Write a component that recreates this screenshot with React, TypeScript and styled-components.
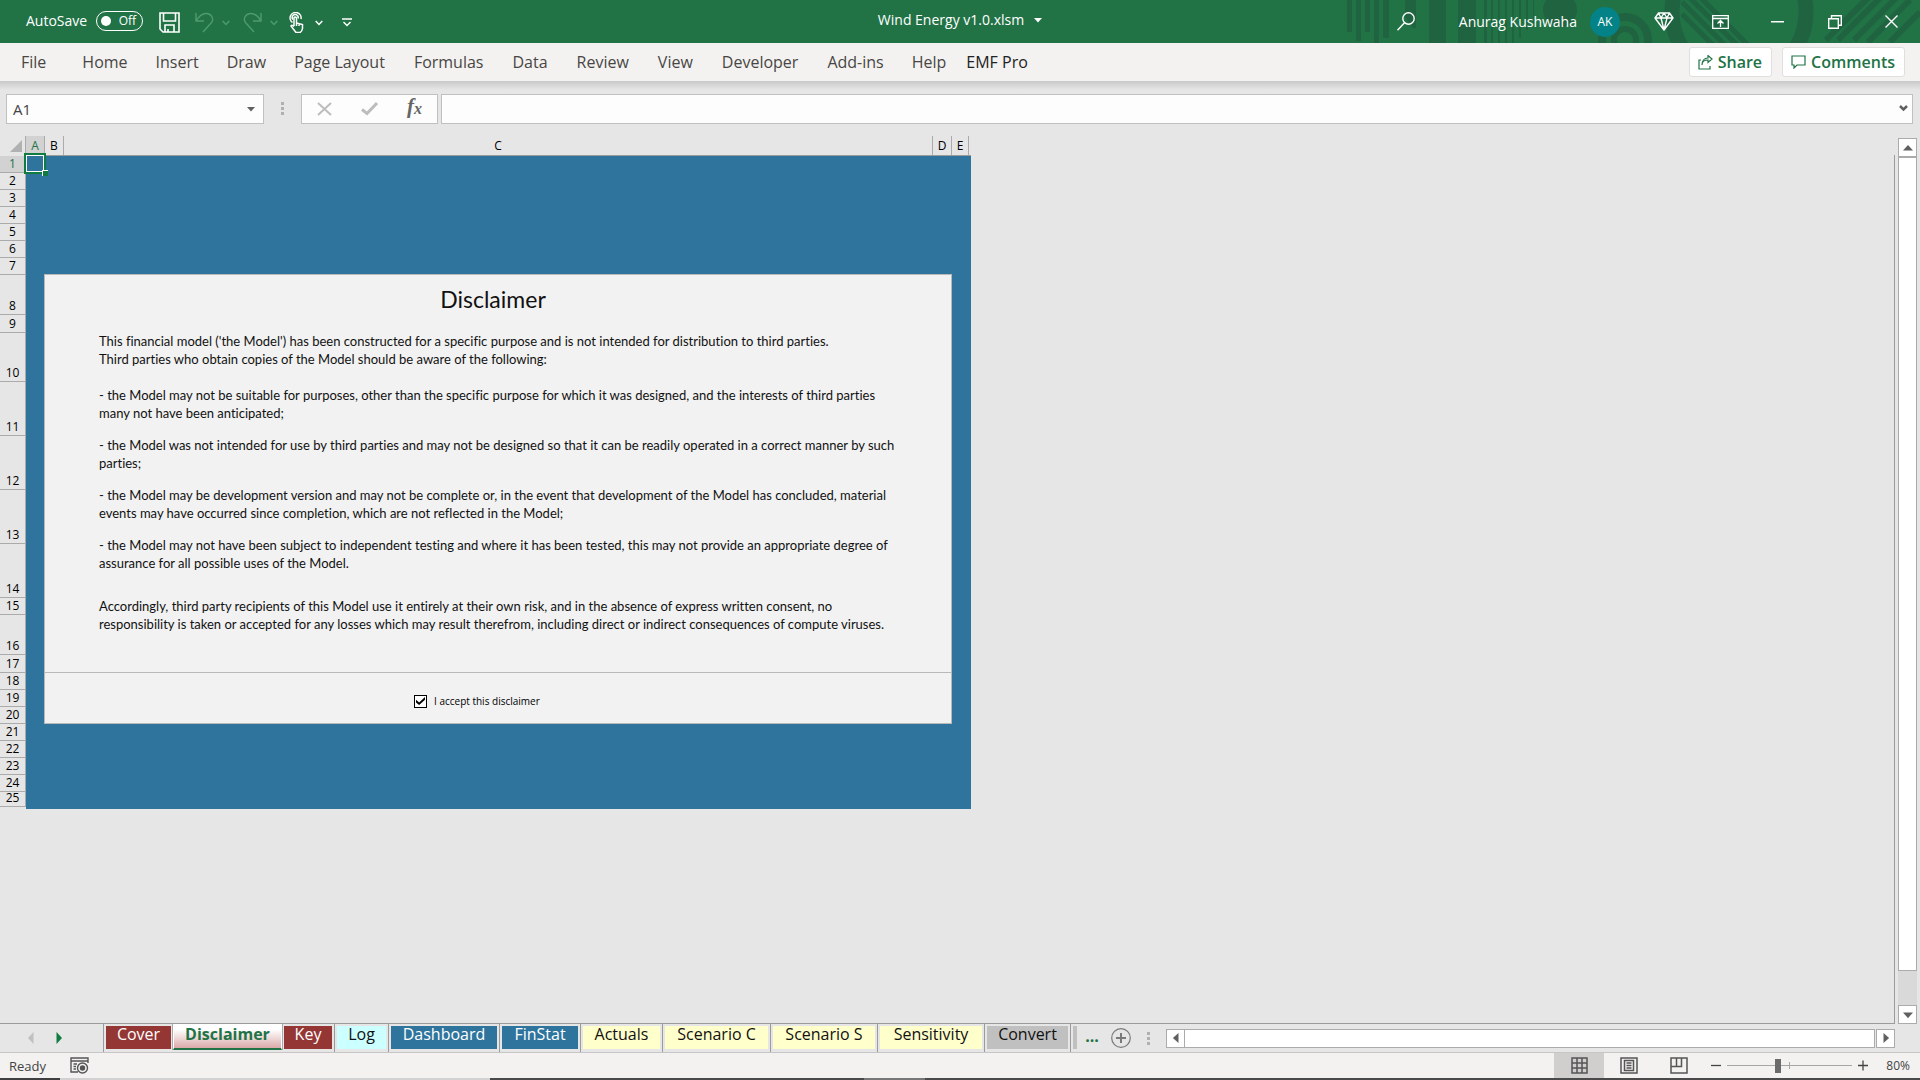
import React from "react";
import styled, { createGlobalStyle } from "styled-components";

const GlobalStyle = createGlobalStyle`
  *, *::before, *::after { box-sizing: border-box; }
  body { margin: 0; background: #e6e6e6; font-family: "Open Sans", "Noto Sans", sans-serif; }
  button, input { font: inherit; color: inherit; }
  button { border: 0; padding: 0; background: none; display: inline-flex; align-items: center; justify-content: center; }
  svg { display: block; flex: none; }
`;

/* ---------- shell ---------- */
const Window = styled.div`
  display: flex;
  flex-direction: column;
  min-height: 100vh;
`;

/* ---------- title bar ---------- */
const TitleBar = styled.header`
  position: relative;
  display: grid;
  grid-template-columns: 1fr auto 1fr;
  align-items: center;
  height: 43px;
  background: #217346;
  color: #fff;
  font-size: 14px;
`;
const Pattern = styled.svg`
  position: absolute;
  top: 0;
  right: 0;
`;
const QuickAccess = styled.div`
  display: flex;
  align-items: center;
  padding: 0 0 2px 26px;
`;
const AutoSave = styled.span`
  margin-right: 9px;
`;
const Toggle = styled.button`
  width: 47px;
  height: 20px;
  border: 1px solid #fff;
  border-radius: 10px;
  justify-content: space-between;
  padding: 0 6px 0 4px;
  font-size: 12px;
  margin-right: 16px;
  &::before {
    content: "";
    width: 10px;
    height: 10px;
    border-radius: 50%;
    background: #fff;
  }
`;
const QuickButton = styled.button<{ $gap: number; $dim?: boolean }>`
  margin-right: ${(p) => p.$gap}px;
  padding-top: 4px;
  color: ${(p) => (p.$dim ? "#4f9a70" : "#fff")};
`;
const DocName = styled.button`
  position: relative;
  gap: 10px;
  padding-bottom: 4px;
`;
const TitleRight = styled.div`
  position: relative;
  display: flex;
  align-items: center;
  justify-content: flex-end;
`;
const Account = styled.button`
  gap: 13px;
  margin: 0 15px 0 44px;
`;
const Avatar = styled.span`
  width: 30px;
  height: 30px;
  border-radius: 50%;
  background: #038387;
  display: grid;
  place-items: center;
  font-size: 12px;
`;
const WindowButton = styled.button`
  width: 57px;
  height: 43px;
`;

/* ---------- ribbon ---------- */
const Ribbon = styled.nav`
  display: flex;
  align-items: center;
  height: 38px;
  padding: 0 15px 0 21px;
  background: #f3f2f1;
  font-size: 16px;
  color: #444;
`;
const RibbonTab = styled.button<{ $gap: number; $dark?: boolean }>`
  margin-right: ${(p) => p.$gap}px;
  color: ${(p) => (p.$dark ? "#222" : "#484644")};
  white-space: nowrap;
`;
const RibbonActions = styled.div`
  display: flex;
  gap: 10px;
  margin-left: auto;
`;
const ActionButton = styled.button`
  height: 30px;
  padding: 0 9px 0 8px;
  gap: 5px;
  background: #fff;
  border: 1px solid #e1dfdd;
  border-radius: 3px;
  color: #217346;
  font-size: 16px;
  font-weight: 600;
`;

/* ---------- formula bar ---------- */
const FormulaBar = styled.div`
  display: flex;
  align-items: center;
  height: 55px;
  padding: 0 7px 0 6px;
  background: linear-gradient(#c9c9c9, #e6e6e6 9px);
`;
const Field = styled.div<{ $grow?: boolean }>`
  display: flex;
  align-items: center;
  flex: ${(p) => (p.$grow ? "1" : "0 0 258px")};
  height: 30px;
  padding: 0 ${(p) => (p.$grow ? 4 : 8)}px 0 0;
  background: #fdfdfd;
  border: 1px solid #c0c0c0;
  color: #606060;
`;
const FieldInput = styled.input`
  flex: 1;
  min-width: 0;
  height: 28px;
  padding: 0 0 0 6px;
  border: 0;
  outline: 0;
  background: transparent;
  color: #444;
  font-size: 15px;
`;
const Grip = styled.span<{ $space: number }>`
  width: 3px;
  height: 13px;
  margin: 0 ${(p) => p.$space}px;
  background: repeating-linear-gradient(#b0b0b0 0 3px, transparent 3px 5px);
`;
const FxGroup = styled.div`
  display: flex;
  width: 137px;
  height: 30px;
  margin-right: 3px;
  background: #fdfdfd;
  border: 1px solid #c0c0c0;
`;
const FxButton = styled.button<{ $fx?: boolean }>`
  flex: 1;
  color: #bdbdbd;
  ${(p) => p.$fx && `color: #666; padding-bottom: 4px; font: italic bold 21px "Liberation Serif", serif;`}
  small { font-size: 16px; padding-top: 4px; }
`;

/* ---------- sheet ---------- */
const Workspace = styled.main`
  display: flex;
  flex: 1;
  padding-right: 3px;
`;
const SheetArea = styled.div`
  display: flex;
  flex-direction: column;
  flex: 1;
`;
const ColumnHeads = styled.div`
  display: flex;
  height: 19px;
  font-size: 12px;
  line-height: 20px;
  text-align: center;
  color: #000;
`;
const Corner = styled.div`
  width: 26px;
  display: flex;
  align-items: flex-end;
  justify-content: flex-end;
  padding: 0 3px 3px 0;
  border-right: 1px solid #ababab;
`;
const ColumnHead = styled.div<{ $w: number; $on?: boolean }>`
  width: ${(p) => p.$w}px;
  border-right: 1px solid #ababab;
  background: ${(p) => (p.$on ? "#d2d2d2" : "transparent")};
  color: ${(p) => (p.$on ? "#217346" : "#000")};
`;
const SheetBody = styled.div`
  display: flex;
  align-items: flex-start;
  flex: 1;
  border-right: 1px solid #9b9b9b;
  border-bottom: 1px solid #9b9b9b;
`;
const RowHeads = styled.div`
  width: 26px;
  padding-top: 1px;
  border-right: 1px solid #ababab;
`;
const RowHead = styled.div<{ $h: number; $on?: boolean }>`
  display: flex;
  align-items: flex-end;
  justify-content: center;
  height: ${(p) => p.$h}px;
  border-bottom: 1px solid #ababab;
  background: ${(p) => (p.$on ? "#d2d2d2" : "transparent")};
  color: ${(p) => (p.$on ? "#217346" : "#000")};
  font-size: 12px;
  line-height: 16px;
`;
const Cells = styled.div`
  position: relative;
  width: 945px;
  padding: 118px 19px 85px 18px;
  background: #2e749d;
  border-top: 1px solid #9b9b9b;
`;
const Cursor = styled.div`
  position: absolute;
  top: -3px;
  left: -2px;
  width: 22px;
  height: 21px;
  border: 2px solid #107c41;
  outline: 1px solid #fff;
  outline-offset: -3px;
  &::after {
    content: "";
    position: absolute;
    right: -4px;
    bottom: -4px;
    width: 6px;
    height: 6px;
    background: #107c41;
    border-top: 1px solid #fff;
    border-left: 1px solid #fff;
  }
`;
const Panel = styled.section`
  border: 1px solid #b9b9b9;
  background: #f2f2f2;
  color: #111;
  font-family: Lato, "Open Sans", sans-serif;
  font-variant-ligatures: none;
`;
const PanelTitle = styled.h1`
  margin: 0;
  padding: 9px 10px 18px 0;
  font-size: 23px;
  line-height: 30px;
  font-weight: 400;
  text-align: center;
`;
const PanelText = styled.div`
  height: 341px;
  padding-left: 54px;
  font-size: 13px;
  line-height: 18px;
  white-space: nowrap;
  border-bottom: 1px solid #b9b9b9;
`;
const Para = styled.p<{ $after: number }>`
  margin: 0 0 ${(p) => p.$after}px;
`;
const Accept = styled.label`
  display: flex;
  align-items: center;
  gap: 7px;
  height: 50px;
  padding: 6px 0 0 369px;
  font-size: 10px;
  font-family: "Open Sans", sans-serif;
  color: #000;
`;
const Tick = styled.input`
  appearance: none;
  display: grid;
  place-items: center;
  width: 13px;
  height: 13px;
  margin: 0;
  border: 1px solid #000;
  background: #fff;
  &:checked::after {
    content: "";
    width: 9px;
    height: 8px;
    background: #000;
    clip-path: polygon(0 35%, 35% 68%, 100% 0, 100% 34%, 35% 100%, 0 68%);
  }
`;

/* ---------- scroll bars ---------- */
const VScroll = styled.div`
  display: flex;
  flex-direction: column;
  width: 19px;
  margin: 2px 0 0 3px;
  background: #d9d9d9;
`;
const ScrollButton = styled.button`
  width: 19px;
  height: 19px;
  border: 1px solid #ababab;
  background: #fff;
  color: #606060;
  flex: none;
`;
const VThumb = styled.div`
  flex: 1;
  margin-bottom: 34px;
  background: #fff;
  border: 1px solid #ababab;
`;
const HScroll = styled.div`
  display: flex;
  flex: 1;
  margin-right: 25px;
`;
const HThumb = styled.div`
  flex: 1;
  margin: 0 1px 0 -1px;
  background: #fff;
  border: 1px solid #ababab;
`;

/* ---------- sheet tabs ---------- */
const TabBar = styled.div`
  display: flex;
  align-items: center;
  height: 29px;
  border-bottom: 1px solid #c6c6c6;
  color: #606060;
`;
const TabNav = styled.div`
  display: flex;
  gap: 20px;
  width: 103px;
  padding-left: 27px;
`;
const NavButton = styled.button<{ $off?: boolean }>`
  color: ${(p) => (p.$off ? "#c0c0c0" : "#107c41")};
`;
const Tabs = styled.div`
  display: flex;
  align-self: stretch;
`;
const TabSlot = styled.div<{ $bare?: boolean }>`
  display: flex;
  align-items: flex-start;
  padding: 2px 2px 3px 2px;
  border-left: ${(p) => (p.$bare ? 0 : 1)}px solid #9b9b9b;
`;
const SheetTab = styled.button<{ $w: number; $bg: string; $ink: string }>`
  width: ${(p) => p.$w}px;
  height: 23px;
  padding-bottom: 7px;
  background: ${(p) => p.$bg};
  color: ${(p) => p.$ink};
  font-size: 16px;
  line-height: 18px;
  white-space: nowrap;
`;
const ActiveTab = styled.button`
  width: 109px;
  height: 26px;
  padding-bottom: 5px;
  border: 1px solid #fff;
  border-bottom: 2px solid #217346;
  background: linear-gradient(#fff 20%, #dba9a9);
  box-shadow: -1px 0 #ababab, 1px 0 #ababab;
  color: #217346;
  font-size: 16px;
  line-height: 18px;
  font-weight: 700;
`;
const MoreTabs = styled.button`
  width: 26px;
  padding-bottom: 5px;
  color: #217346;
  font-size: 16px;
  font-weight: 700;
  margin-right: 6px;
`;

/* ---------- status bar ---------- */
const StatusBar = styled.footer`
  display: flex;
  align-items: center;
  height: 25px;
  padding: 0 10px 0 9px;
  background: #f3f2f1;
  color: #444;
  font-size: 12px;
`;
const Ready = styled.span`
  font-size: 13px;
`;
const Macro = styled.button`
  margin: 0 auto 0 24px;
`;
const ViewGroup = styled.div`
  display: flex;
  margin-right: 7px;
`;
const ViewButton = styled.button<{ $on?: boolean }>`
  width: 50px;
  height: 25px;
  background: ${(p) => (p.$on ? "#d0cfce" : "transparent")};
`;
const ZoomSlider = styled.input`
  appearance: none;
  width: 125px;
  height: 15px;
  margin: 0 6px;
  background:
    linear-gradient(#a6a6a6, #a6a6a6) 62px 50% / 1px 7px no-repeat,
    linear-gradient(#a6a6a6, #a6a6a6) 0 50% / 100% 1px no-repeat;
  &::-webkit-slider-thumb {
    appearance: none;
    width: 6px;
    height: 14px;
    background: #6b6b6b;
  }
`;
const ZoomValue = styled.button`
  width: 42px;
  justify-content: flex-end;
`;
const TaskbarEdge = styled.div`
  height: 2px;
  background: linear-gradient(
    90deg,
    #3f3f3f 60px, #d2d2d2 60px 490px, #4a4a4a 490px 864px, #777 864px 925px, #4a4a4a 925px
  );
`;

const Chevron = () => (
  <svg width="8" height="6" viewBox="0 0 8 6" fill="none" stroke="currentColor" strokeWidth="1.5"><path d="M.7 1 4 4.4 7.3 1" /></svg>
);
const Arrow = ({ turn = 0, size = 8 }: { turn?: number; size?: number }) => (
  <svg width={size} height={size} viewBox="0 0 8 8" fill="currentColor"><path d="M0 2h8L4 6.5z" transform={`rotate(${turn} 4 4)`} /></svg>
);
const NavArrow = ({ flip }: { flip?: boolean }) => (
  <svg width="8" height="12" viewBox="0 0 8 12" fill="currentColor"><path d={flip ? "M6.500 0v12L1 6z" : "M1.500 0v12L7 6z"} /></svg>
);

const TitlePattern = () => (
  <Pattern width="580" height="43" viewBox="1340 0 580 43" fill="#1f6340" stroke="none" aria-hidden="true">
    <path d="M1347 0h5v32h-5zM1356 0h5v41h-5zM1365 0h5v32h-5zM1374 0h5v43h-5zM1383 0h6v38h-6zM1405 0h11v28h-3l-8-11zM1429 0h17v43h-17zM1458 0h18v43h-18z" />
    <path d="M1484 0h3v43h-3zM1491 0h2v43h-2zM1498 0h2v43h-2zM1505 0h2v43h-2zM1512 0h2v43h-2zM1519 0h2v38h-2zM1526 0h2v30h-2zM1533 0h1v24h-1z" />
    <circle cx="1560" cy="10" r="17" />
    <g fill="none" stroke="#1f6340">
      <circle cx="1625" cy="40" r="23" strokeWidth="8" />
      <circle cx="1625" cy="40" r="11" strokeWidth="6" />
      <circle cx="1739" cy="12" r="67" strokeWidth="15" />
      <path strokeWidth="5" d="m1682 14 31 31m-31-43 43 43m-36-48 48 48m-37-48 48 48" />
      <path strokeWidth="6" d="m1826 40 42-42m-30 42 42-42m-26 42 42-42m-28 44 42-42m-20 42 30-30" />
    </g>
  </Pattern>
);

const rows = [17, 17, 17, 17, 17, 17, 17, 40, 18, 49, 54, 54, 54, 54, 17, 40, 18, 17, 17, 17, 17, 17, 17, 17, 15];
const columns: [string, number][] = [["A", 19], ["B", 19], ["C", 869], ["D", 19], ["E", 17]];
const ribbonTabs: [string, number][] = [
  ["File", 36], ["Home", 28], ["Insert", 28], ["Draw", 28], ["Page Layout", 29], ["Formulas", 29],
  ["Data", 29], ["Review", 29], ["View", 29], ["Developer", 29], ["Add-ins", 28], ["Help", 20],
];

const red = "#943634";
const blue = "#2e749d";
const cream = "#ffffcc";
const laterTabs: [string, number, string, string][] = [
  ["Log", 49, "#ccffff", "#111"],
  ["Dashboard", 106, blue, "#fff"],
  ["FinStat", 76, blue, "#fff"],
  ["Actuals", 77, cream, "#111"],
  ["Scenario C", 103, cream, "#111"],
  ["Scenario S", 102, cream, "#111"],
  ["Sensitivity", 102, cream, "#111"],
  ["Convert", 81, "#c0c0c0", "#111"],
];

export default function App() {
  return (
    <Window>
      <GlobalStyle />
      <TitleBar>
        <TitlePattern />
        <QuickAccess>
          <AutoSave>AutoSave</AutoSave>
          <Toggle role="switch" aria-checked="false" aria-label="AutoSave">Off</Toggle>
          <QuickButton $gap={15} aria-label="Save">
            <svg width="21" height="21" viewBox="0 0 21 21" fill="none" stroke="currentColor" strokeWidth="1.6"><path d="M1 1h19v19H4l-3-3zM4.5 1v8h12V1M6 20v-7h9v7M9 20v-3" /></svg>
          </QuickButton>
          <QuickButton $gap={8} $dim aria-label="Undo">
            <svg width="19" height="21" viewBox="0 0 19 21" fill="none" stroke="currentColor" strokeWidth="1.4"><path d="M1 1v8h8M1 9C4 4 8 1 12 1.500c5 .5 7 6 4.500 9L8 20" /></svg>
          </QuickButton>
          <QuickButton $gap={13} $dim aria-label="Undo list"><Chevron /></QuickButton>
          <QuickButton $gap={8} $dim aria-label="Redo">
            <svg width="19" height="21" viewBox="0 0 19 21" fill="none" stroke="currentColor" strokeWidth="1.4"><path d="M18 1v8h-8M18 9C15 4 11 1 7 1.500c-5 .5-7 6-4.500 9L11 20" /></svg>
          </QuickButton>
          <QuickButton $gap={11} $dim aria-label="Redo list"><Chevron /></QuickButton>
          <QuickButton $gap={11} aria-label="Touch/Mouse Mode">
            <svg width="15" height="21" viewBox="0 0 15 21" fill="none" stroke="currentColor" strokeWidth="1.5"><path d="M3.500 10.500A5.500 5.500 0 1 1 12 7" /><path d="M4 7.500a3 3 0 1 1 5-1" /><path d="M5 14V6q1.200-2 2.500 0v5l6 1.500v4q-.5 3-2.500 4H7L2 14q1-1.500 3 .5M10 11v3m-2.500-3v3" /></svg>
          </QuickButton>
          <QuickButton $gap={19} aria-label="Touch list"><Chevron /></QuickButton>
          <QuickButton $gap={0} aria-label="Customize Quick Access Toolbar">
            <svg width="10" height="9" viewBox="0 0 10 9" fill="none" stroke="currentColor" strokeWidth="1.4"><path d="M0 1h10M1.500 4 5 7.500 8.500 4" /></svg>
          </QuickButton>
        </QuickAccess>
        <DocName>Wind Energy v1.0.xlsm <Arrow /></DocName>
        <TitleRight>
          <button aria-label="Search">
            <svg width="18" height="19" viewBox="0 0 18 19" fill="none" stroke="currentColor" strokeWidth="1.4"><circle cx="11.500" cy="6.500" r="5.700" /><path d="m7.500 10.800-7 7.500" /></svg>
          </button>
          <Account>Anurag Kushwaha <Avatar>AK</Avatar></Account>
          <WindowButton aria-label="Premium">
            <svg width="20" height="19" viewBox="0 0 20 19" fill="none" stroke="currentColor" strokeWidth="1.4" strokeLinejoin="round"><path d="M4.500 1h11L19 6l-9 12L1 6zM1 6h18M4.500 1 7 6l3 12 3-12 2.500-5M7 6l3-5 3 5" /></svg>
          </WindowButton>
          <WindowButton aria-label="Ribbon Display Options">
            <svg width="17" height="14" viewBox="0 0 17 14" fill="none" stroke="currentColor" strokeWidth="1.3"><path d="M.7.700h15.600v12.600H.7zM.7 3.500h15.600M8.500 12V6M5.500 8.500l3-3 3 3" /></svg>
          </WindowButton>
          <WindowButton aria-label="Minimize">
            <svg width="13" height="2" viewBox="0 0 13 2" fill="currentColor"><path d="M0 0h13v1.500H0z" /></svg>
          </WindowButton>
          <WindowButton aria-label="Restore">
            <svg width="14" height="14" viewBox="0 0 14 14" fill="none" stroke="currentColor" strokeWidth="1.400"><path d="M.7 3.700h9.600v9.600H.7zM3.500 3.500V.7h9.800v9.600h-3" /></svg>
          </WindowButton>
          <WindowButton aria-label="Close">
            <svg width="13" height="13" viewBox="0 0 13 13" fill="none" stroke="currentColor" strokeWidth="1.400"><path d="m.5.500 12 12m0-12-12 12" /></svg>
          </WindowButton>
        </TitleRight>
      </TitleBar>

      <Ribbon>
        {ribbonTabs.map(([t, gap]) => <RibbonTab key={t} $gap={gap}>{t}</RibbonTab>)}
        <RibbonTab $gap={0} $dark>EMF Pro</RibbonTab>
        <RibbonActions>
          <ActionButton>
            <svg width="15" height="15" viewBox="0 0 15 15" fill="none" stroke="currentColor" strokeWidth="1.200"><path d="M3 5H1v9h11v-3M4 10c0-3 2-5 6-5V7.500L14 4l-4-3.500V3C6 3 4 6 4 10z" /></svg>
            Share
          </ActionButton>
          <ActionButton>
            <svg width="15" height="14" viewBox="0 0 15 14" fill="none" stroke="currentColor" strokeWidth="1.200"><path d="M1 1h13v9H6l-3 3v-3H1z" /></svg>
            Comments
          </ActionButton>
        </RibbonActions>
      </Ribbon>

      <FormulaBar>
        <Field>
          <FieldInput aria-label="Name Box" defaultValue="A1" />
          <button aria-label="Name list"><Arrow /></button>
        </Field>
        <Grip $space={17} />
        <FxGroup>
          <FxButton aria-label="Cancel">
            <svg width="15" height="14" viewBox="0 0 15 14" fill="none" stroke="currentColor" strokeWidth="2"><path d="m1 1 13 12M14 1 1 13" /></svg>
          </FxButton>
          <FxButton aria-label="Enter">
            <svg width="17" height="14" viewBox="0 0 17 14" fill="none" stroke="currentColor" strokeWidth="3"><path d="m1 7.500 5 4L16 1" /></svg>
          </FxButton>
          <FxButton $fx aria-label="Insert Function">f<small>x</small></FxButton>
        </FxGroup>
        <Field $grow>
          <FieldInput aria-label="Formula Bar" />
          <button aria-label="Expand Formula Bar">
            <svg width="9" height="7" viewBox="0 0 9 7" fill="none" stroke="#606060" strokeWidth="2.500"><path d="m1 1 3.500 3.500L8 1" /></svg>
          </button>
        </Field>
      </FormulaBar>

      <Workspace>
        <SheetArea>
          <ColumnHeads>
            <Corner>
              <svg width="12" height="12" viewBox="0 0 12 12" fill="#b1b1b1"><path d="M12 0v12H0z" /></svg>
            </Corner>
            {columns.map(([name, w]) => <ColumnHead key={name} $w={w} $on={name === "A"}>{name}</ColumnHead>)}
          </ColumnHeads>
          <SheetBody>
            <RowHeads>
              {rows.map((h, i) => <RowHead key={i} $h={h} $on={i === 0}>{i + 1}</RowHead>)}
            </RowHeads>
            <Cells>
              <Cursor />
              <Panel>
                <PanelTitle>Disclaimer</PanelTitle>
                <PanelText>
                  <Para $after={18}>
                    This financial model ('the Model') has been constructed for a specific purpose and is not intended for distribution to third parties.<br />
                    Third parties who obtain copies of the Model should be aware of the following:
                  </Para>
                  <Para $after={14}>
                    - the Model may not be suitable for purposes, other than the specific purpose for which it was designed, and the interests of third parties<br />
                    many not have been anticipated;
                  </Para>
                  <Para $after={14}>
                    - the Model was not intended for use by third parties and may not be designed so that it can be readily operated in a correct manner by such<br />
                    parties;
                  </Para>
                  <Para $after={14}>
                    - the Model may be development version and may not be complete or, in the event that development of the Model has concluded, material<br />
                    events may have occurred since completion, which are not reflected in the Model;
                  </Para>
                  <Para $after={25}>
                    - the Model may not have been subject to independent testing and where it has been tested, this may not provide an appropriate degree of<br />
                    assurance for all possible uses of the Model.
                  </Para>
                  <Para $after={0}>
                    Accordingly, third party recipients of this Model use it entirely at their own risk, and in the absence of express written consent, no<br />
                    responsibility is taken or accepted for any losses which may result therefrom, including direct or indirect consequences of compute viruses.
                  </Para>
                </PanelText>
                <Accept>
                  <Tick type="checkbox" defaultChecked />
                  I accept this disclaimer
                </Accept>
              </Panel>
            </Cells>
          </SheetBody>
        </SheetArea>
        <VScroll>
          <ScrollButton aria-label="Scroll up"><Arrow turn={180} size={10} /></ScrollButton>
          <VThumb />
          <ScrollButton aria-label="Scroll down"><Arrow size={10} /></ScrollButton>
        </VScroll>
      </Workspace>

      <TabBar>
        <TabNav>
          <NavButton $off aria-label="Previous sheet"><NavArrow flip /></NavButton>
          <NavButton aria-label="Next sheet"><NavArrow /></NavButton>
        </TabNav>
        <Tabs>
          <TabSlot><SheetTab $w={65} $bg={red} $ink="#fff">Cover</SheetTab></TabSlot>
          <ActiveTab>Disclaimer</ActiveTab>
          <TabSlot $bare><SheetTab $w={48} $bg={red} $ink="#fff">Key</SheetTab></TabSlot>
          {laterTabs.map(([name, w, bg, ink]) => (
            <TabSlot key={name}><SheetTab $w={w} $bg={bg} $ink={ink}>{name}</SheetTab></TabSlot>
          ))}
          <TabSlot><SheetTab $w={4} $bg="#c0c0c0" $ink="#111" aria-label="Next tab" /></TabSlot>
        </Tabs>
        <MoreTabs aria-label="More sheets">...</MoreTabs>
        <button aria-label="New sheet">
          <svg width="20" height="20" viewBox="0 0 20 20" fill="none" stroke="#7a7a7a"><circle cx="10" cy="10" r="9.300" strokeWidth="1.200" /><path strokeWidth="2" d="M10 5v10M5 10h10" /></svg>
        </button>
        <Grip $space={16} />
        <HScroll>
          <ScrollButton aria-label="Scroll left"><Arrow turn={90} size={10} /></ScrollButton>
          <HThumb />
          <ScrollButton aria-label="Scroll right"><Arrow turn={-90} size={10} /></ScrollButton>
        </HScroll>
      </TabBar>

      <StatusBar>
        <Ready>Ready</Ready>
        <Macro aria-label="Record Macro">
          <svg width="19" height="17" viewBox="0 0 19 17" fill="none" stroke="#555" strokeWidth="1.400"><path d="M8 15H1V1h17v5M1 4h17M3.500 7H7M3.500 9.500H6M3.500 12H6" /><circle cx="12.500" cy="11" r="5" /><circle cx="12.500" cy="11" r="2" fill="#555" /></svg>
        </Macro>
        <ViewGroup>
          <ViewButton $on aria-label="Normal">
            <svg width="17" height="17" viewBox="0 0 17 17" fill="none" stroke="#555" strokeWidth="1.500"><path d="M1 1h15v15H1zM6 1v15M11 1v15M1 6h15M1 11h15" /></svg>
          </ViewButton>
          <ViewButton aria-label="Page Layout">
            <svg width="18" height="17" viewBox="0 0 18 17" fill="none" stroke="#555" strokeWidth="1.500"><path d="M1 1h16v15H1zM4.500 3.500h9v10h-9zM6.500 6h5M6.500 8.500h5M6.500 11h5" /></svg>
          </ViewButton>
          <ViewButton aria-label="Page Break Preview">
            <svg width="18" height="17" viewBox="0 0 18 17" fill="none" stroke="#555" strokeWidth="1.500"><path d="M1 1h16v15H1zM1 9.500h10.500V1M6.500 1v8.500" /></svg>
          </ViewButton>
        </ViewGroup>
        <button aria-label="Zoom out">
          <svg width="10" height="11" viewBox="0 0 10 11" stroke="#444" strokeWidth="1.300"><path d="M0 5.500h10" /></svg>
        </button>
        <ZoomSlider type="range" min={10} max={190} defaultValue={83} aria-label="Zoom" />
        <button aria-label="Zoom in">
          <svg width="10" height="11" viewBox="0 0 10 11" stroke="#444" strokeWidth="1.300"><path d="M0 5.500h10M5 .5v10" /></svg>
        </button>
        <ZoomValue>80%</ZoomValue>
      </StatusBar>
      <TaskbarEdge />
    </Window>
  );
}
